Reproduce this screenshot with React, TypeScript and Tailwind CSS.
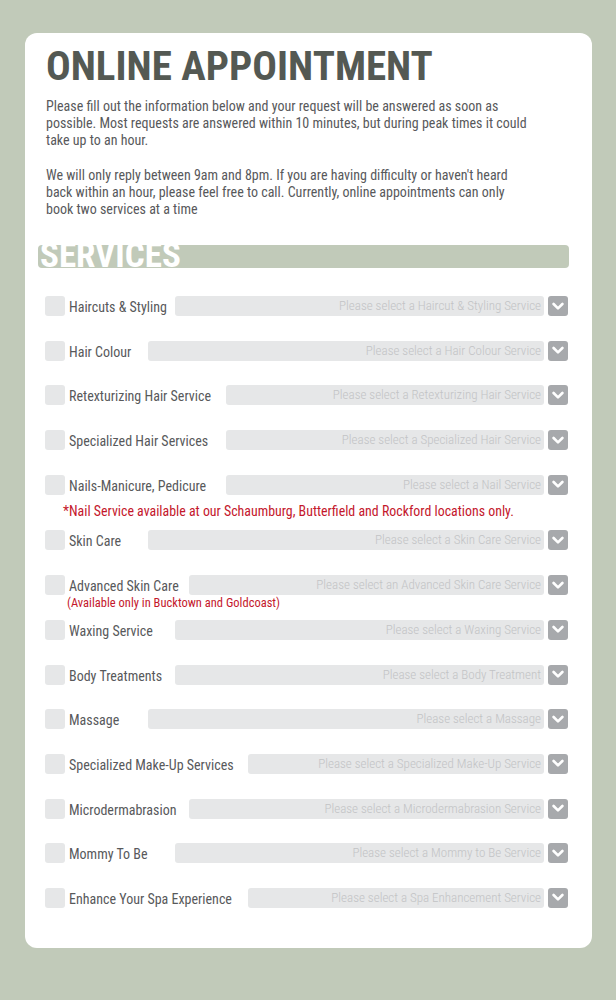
import React from "react";

type Row = { label: string; ph: string; lw: string; note?: string; nailNote?: boolean };

const rows: Row[] = [
  { label: "Haircuts & Styling", ph: "Please select a Haircut & Styling Service", lw: "w-[106px]" },
  { label: "Hair Colour", ph: "Please select a Hair Colour Service", lw: "w-[79px]" },
  { label: "Retexturizing Hair Service", ph: "Please select a Retexturizing Hair Service", lw: "w-[157px]" },
  { label: "Specialized Hair Services", ph: "Please select a Specialized Hair Service", lw: "w-[157px]" },
  { label: "Nails-Manicure, Pedicure", ph: "Please select a Nail Service", lw: "w-[157px]", nailNote: true },
  { label: "Skin Care", ph: "Please select a Skin Care Service", lw: "w-[79px]" },
  { label: "Advanced Skin Care", ph: "Please select an Advanced Skin Care Service", lw: "w-[120px]", note: "(Available only in Bucktown and Goldcoast)" },
  { label: "Waxing Service", ph: "Please select a Waxing Service", lw: "w-[106px]" },
  { label: "Body Treatments", ph: "Please select a Body Treatment", lw: "w-[106px]" },
  { label: "Massage", ph: "Please select a Massage", lw: "w-[79px]" },
  { label: "Specialized Make-Up Services", ph: "Please select a Specialized Make-Up Service", lw: "w-[179px]" },
  { label: "Microdermabrasion", ph: "Please select a Microdermabrasion Service", lw: "w-[120px]" },
  { label: "Mommy To Be", ph: "Please select a Mommy to Be Service", lw: "w-[106px]" },
  { label: "Enhance Your Spa Experience", ph: "Please select a Spa Enhancement Service", lw: "w-[179px]" },
];

function Chevron() {
  return (
    <svg width="12" height="9" viewBox="0 0 12 9">
      <path d="M1.6 2 L6 6.4 L10.4 2" fill="none" stroke="#ffffff" strokeWidth="2.6" strokeLinecap="round" strokeLinejoin="round" />
    </svg>
  );
}

function ServiceRow({ r }: { r: Row }) {
  return (
    <div className="flex flex-col">
      <div className="flex h-5 items-start">
        <div className="h-5 w-5 shrink-0 rounded-[3px] bg-[#e6e7e8]" />
        <div className={`ml-[4px] shrink-0 ${r.lw}`}>
          <div className="h-5 whitespace-nowrap pt-[1px] text-[14px] leading-[20px] text-[#58595b]">{r.label}</div>
          {r.note && (
            <div className="-ml-[2px] mt-[1px] whitespace-nowrap text-[12.5px] leading-[14px] text-[#c4172c]">{r.note}</div>
          )}
        </div>
        <div className="flex h-5 min-w-0 flex-1 items-center justify-end overflow-hidden rounded-[3px] bg-[#e6e7e8] pr-[3px]">
          <span className="whitespace-nowrap text-[13px] font-light leading-[20px] text-[#c2c3c5]">{r.ph}</span>
        </div>
        <div className="ml-[4px] flex h-5 w-5 shrink-0 items-center justify-center rounded-[3px] bg-[#a7a9ac]">
          <Chevron />
        </div>
      </div>
      {r.nailNote && (
        <div className="-mb-[12px] ml-[18px] mt-[9px] h-[14px] whitespace-nowrap text-[13.9px] leading-[14px] text-[#c4172c]">
          *Nail Service available at our Schaumburg, Butterfield and Rockford locations only.
        </div>
      )}
    </div>
  );
}

export default function App() {
  return (
    <div className="min-h-[1000px] w-full bg-[#c1cab9] px-[25px] pb-[52px] pt-[33px] font-['Roboto_Condensed','Roboto',sans-serif]">
      <div className="h-[915px] w-[567px] rounded-[12px] bg-white pl-[21px] pr-[24px] pt-[10px]">
        <h1 className="text-[41px] font-bold leading-[46px] text-[#545953]">ONLINE APPOINTMENT</h1>
        <div className="mt-[9px] w-[485px] text-[14px] leading-[17px] text-[#58595b]">
          <p>
            Please fill out the information below and your request will be answered as soon as possible. Most
            requests are answered within 10 minutes, but during peak times it could take up to an hour.
          </p>
          <p className="mt-[18px]">
            We will only reply between 9am and 8pm. If you are having difficulty or haven't heard back within an
            hour, please feel free to call. Currently, online appointments can only book two services at a time
          </p>
        </div>
        <div className="relative -ml-[8px] mt-[27px] h-[23px] w-[531px] rounded-[4px] bg-[#c1cab9]">
          <div className="absolute left-[2px] top-[-5px] text-[35px] font-bold leading-[32px] text-white">
            SERVICES
          </div>
        </div>
        <div className="-ml-[1px] mt-[28px] flex flex-col gap-[24.7px]">
          {rows.map((r) => (
            <ServiceRow key={r.label} r={r} />
          ))}
        </div>
      </div>
    </div>
  );
}
